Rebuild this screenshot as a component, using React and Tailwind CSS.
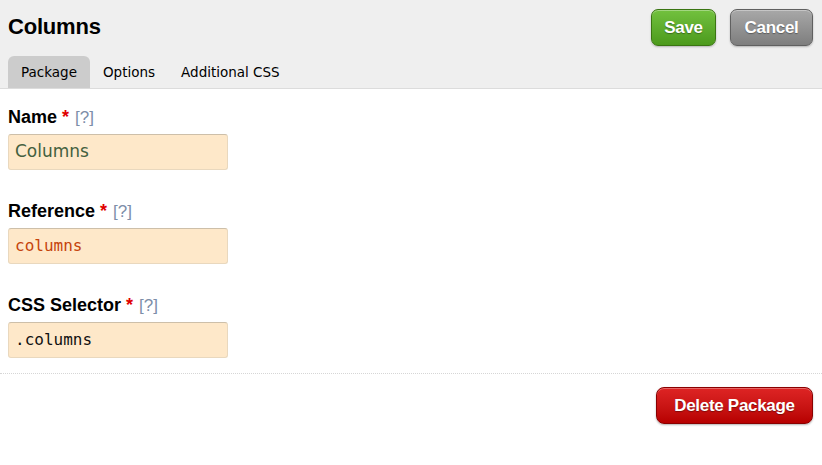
import React from 'react';

const tabs = ['Package', 'Options', 'Additional CSS'];

const fields = [
  { label: 'Name', value: 'Columns', cls: "font-['DejaVu_Sans',sans-serif] text-[17px] text-[#44603f]" },
  { label: 'Reference', value: 'columns', cls: "font-['DejaVu_Sans_Mono',monospace] text-[16px] text-[#c5430c]" },
  { label: 'CSS Selector', value: '.columns', cls: "font-['DejaVu_Sans_Mono',monospace] text-[16px] text-[#111]" },
];

const btnText = "font-['Liberation_Sans',Arial,sans-serif] font-bold text-white text-[17px] tracking-[-0.3px] [text-shadow:0_1px_1px_rgba(0,0,0,0.35)]";

export default function App() {
  return (
    <div className="w-[822px] h-[465px] bg-white font-['Liberation_Sans',Arial,sans-serif] text-black">
      {/* HEADER */}
      <div className="bg-[#efefef] border-b border-[#dcdcdc] h-[89px] flex flex-col">
        <div className="flex items-start justify-between pl-2 pr-[9px] pt-[9px]">
          <h1 className="text-[22px] font-bold leading-none mt-[7px] tracking-[-0.2px]">Columns</h1>
          <div className="flex gap-[14px]">
            <button className={`${btnText} h-[37px] w-[65px] rounded-[7px] border border-[#3a7512] bg-gradient-to-b from-[#72c13e] to-[#4c9a1c] shadow-[inset_0_1px_0_rgba(255,255,255,0.35),0_1px_2px_rgba(0,0,0,0.25)]`}>
              Save
            </button>
            <button className={`${btnText} h-[37px] w-[83px] rounded-[7px] border border-[#606060] bg-gradient-to-b from-[#a8a8a8] to-[#7e7e7e] shadow-[inset_0_1px_0_rgba(255,255,255,0.35),0_1px_2px_rgba(0,0,0,0.25)]`}>
              Cancel
            </button>
          </div>
        </div>
        <div className="flex mt-auto pl-2 font-['DejaVu_Sans',sans-serif] text-[13.5px]">
          {tabs.map((t, i) => (
            <div
              key={t}
              className={`h-[32px] flex items-center rounded-t-[6px] px-[13px] ${i === 0 ? 'bg-[#cccccc]' : ''}`}
            >
              {t}
            </div>
          ))}
        </div>
      </div>

      {/* FIELDS */}
      <div className="flex flex-col gap-[31px] pl-2 pt-[18px]">
        {fields.map(f => (
          <div key={f.label} className="flex flex-col gap-[6px]">
            <div className="text-[18px] leading-[20px] flex items-baseline">
              <span className="font-bold">{f.label}</span>
              <span className="font-bold text-[#e00000] ml-[5px]">*</span>
              <span className="text-[#7d8ea8] ml-[6px] text-[17px]">[?]</span>
            </div>
            <div className={`w-[220px] h-[36px] rounded-[3px] bg-[#fee8c9] border border-[#e9d8be] border-t-[#cdbfa9] flex items-center px-[6px] ${f.cls}`}>
              {f.value}
            </div>
          </div>
        ))}
      </div>

      {/* FOOTER */}
      <div className="border-t border-dotted border-[#d6d6d6] mt-[15px] flex justify-end pt-[13px] pr-[9px]">
        <button className={`${btnText} h-[37px] w-[157px] rounded-[8px] border border-[#8a0000] bg-gradient-to-b from-[#de2424] to-[#b70000] shadow-[inset_0_1px_0_rgba(255,255,255,0.3),0_1px_2px_rgba(0,0,0,0.3)]`}>
          Delete Package
        </button>
      </div>
    </div>
  );
}
